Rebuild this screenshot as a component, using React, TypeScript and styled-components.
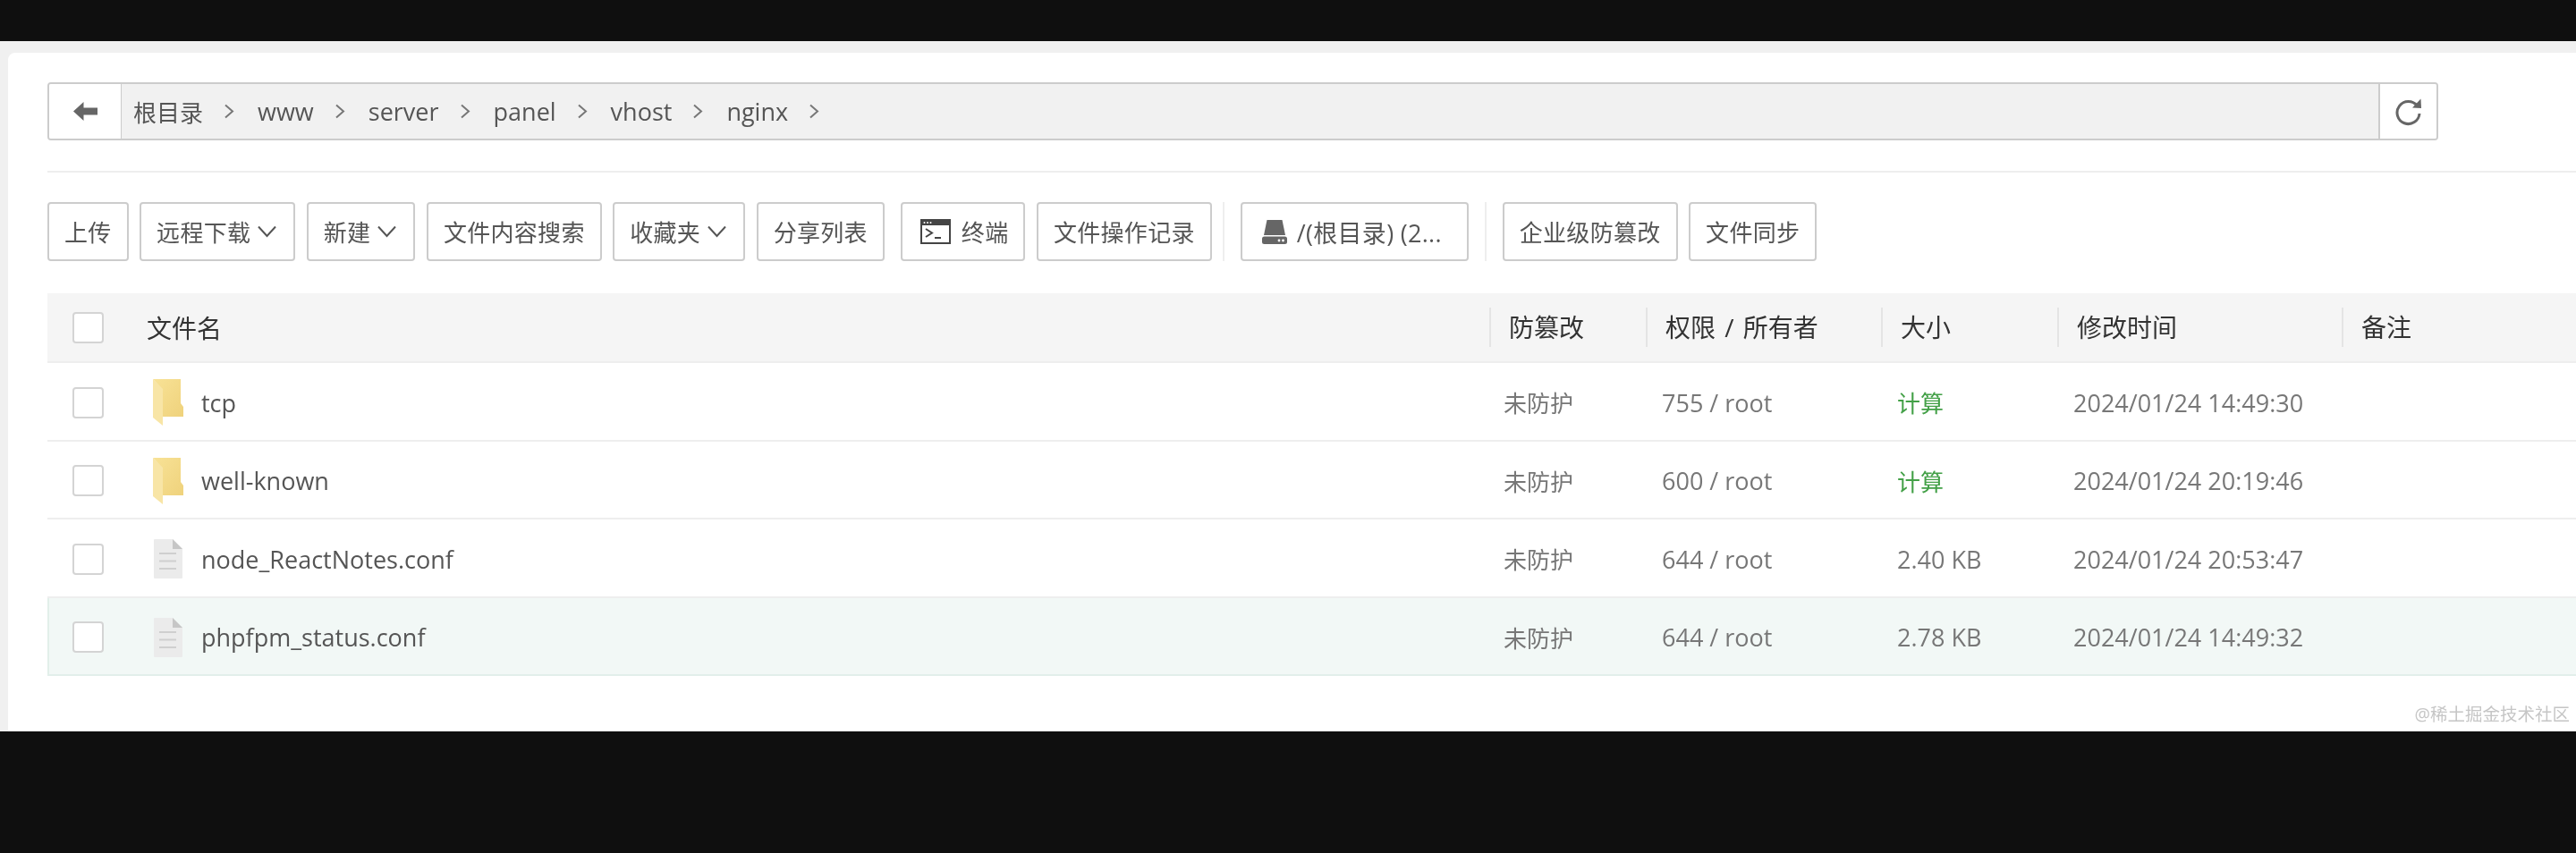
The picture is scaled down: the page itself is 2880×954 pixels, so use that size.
import React from 'react';
import styled, { createGlobalStyle } from 'styled-components';

const GlobalStyle = createGlobalStyle`
  html, body {
    margin: 0;
    padding: 0;
    background: #0f0f0f;
  }
  * {
    box-sizing: border-box;
  }
`;

const FONT = '"Open Sans", "Noto Sans CJK SC", sans-serif';

const Page = styled.div`
  width: 2880px;
  height: 954px;
  padding-top: 46px;
  background: #0f0f0f;
  font-family: ${FONT};
  overflow: hidden;
  filter: blur(0.5px);
`;

const Shell = styled.div`
  height: 772px;
  padding: 13px 0 0 9px;
  background: #f0f0f0;
`;

const Card = styled.div`
  position: relative;
  height: 759px;
  padding: 33px 0 0 44px;
  background: #fff;
  border-radius: 8px 0 0 0;
`;

const PathBar = styled.div`
  display: flex;
  width: 2673px;
  height: 65px;
  background: #f1f1f1;
  border: 2px solid #ccc;
  border-radius: 4px;
  overflow: hidden;
`;

const BackButton = styled.div`
  display: flex;
  flex: none;
  align-items: center;
  justify-content: center;
  width: 81px;
  background: #fff;
  border-right: 1px solid #ccc;
`;

const Crumbs = styled.div`
  display: flex;
  flex: 1;
  align-items: center;
  padding-left: 13px;
`;

const Crumb = styled.span<{ $cjk?: boolean }>`
  display: flex;
  align-items: center;
  gap: 23px;
  margin-right: 26px;
  font-size: ${(p) => (p.$cjk ? 26 : 27)}px;
  color: #555;
`;

const RefreshButton = styled.div`
  display: flex;
  flex: none;
  align-items: center;
  justify-content: center;
  width: 65px;
  background: #fff;
  border-left: 2px solid #ccc;
`;

const Divider = styled.div`
  height: 2px;
  margin: 34px 0 33px;
  background: #eee;
`;

const Toolbar = styled.div`
  display: flex;
  align-items: stretch;
  height: 66px;
`;

const ToolButton = styled.div<{ $gap?: number; $width?: number }>`
  display: flex;
  flex: none;
  align-items: center;
  width: ${(p) => (p.$width ? `${p.$width}px` : 'auto')};
  height: 66px;
  margin-right: ${(p) => p.$gap ?? 12.5}px;
  padding: 0 17px;
  background: #fff;
  border: 2px solid #ccc;
  border-radius: 4px;
  font-size: 26px;
  letter-spacing: 0.3px;
  color: #555;
  white-space: nowrap;
`;

const Caret = styled.svg`
  margin-left: 8px;
  margin-right: 2px;
`;

const IconSlot = styled.span<{ $lead: number; $gap: number }>`
  display: flex;
  margin-left: ${(p) => p.$lead}px;
  margin-right: ${(p) => p.$gap}px;
`;

const DiskLabel = styled.span`
  font-size: 27px;
`;

const ToolSeparator = styled.div`
  flex: none;
  width: 2px;
  margin-right: 18px;
  background: #eee;
`;

const Table = styled.div`
  margin-top: 36px;
`;

const COLUMNS = '1612px 175px 263px 197px 318px 1fr';

const HeadRow = styled.div`
  display: grid;
  grid-template-columns: ${COLUMNS};
  align-items: center;
  height: 78px;
  background: #f5f5f5;
  border-bottom: 2px solid #eee;
  font-size: 28px;
  color: #333;
`;

const NameHead = styled.div`
  display: flex;
  align-items: center;
  padding-left: 28px;
`;

const HeadLabel = styled.div`
  height: 44px;
  padding-left: 20px;
  border-left: 2px solid #e4e4e4;
  line-height: 44px;
  word-spacing: 3px;
`;

const Row = styled.div<{ $active?: boolean }>`
  display: grid;
  grid-template-columns: ${COLUMNS};
  align-items: center;
  height: 87.5px;
  padding-top: 3px;
  background: ${(p) => (p.$active ? '#f2f8f6' : '#fff')};
  border-bottom: 2px solid ${(p) => (p.$active ? '#e2efea' : '#eee')};
  box-shadow: ${(p) => (p.$active ? 'inset 2px 0 0 #e2efea' : 'none')};
  font-size: 27px;
  color: #666;
`;

const NameCell = styled.div`
  display: flex;
  align-items: center;
  padding-left: 28px;
  color: #555;
`;

const Check = styled.span<{ $gap: number }>`
  flex: none;
  width: 35px;
  height: 35px;
  margin-right: ${(p) => p.$gap}px;
  background: #fff;
  border: 2px solid #d4d4d4;
  border-radius: 4px;
`;

const FileName = styled.span`
  margin-left: 20px;
`;

const Cell = styled.div<{ $pad?: number; $green?: boolean; $cjk?: boolean }>`
  padding-left: ${(p) => p.$pad ?? 18}px;
  font-size: ${(p) => (p.$cjk ? 26 : 27)}px;
  color: ${(p) => (p.$green ? '#43a047' : '#777')};
  white-space: nowrap;
`;

const Watermark = styled.div`
  position: absolute;
  right: 7px;
  bottom: 6px;
  font-size: 19.5px;
  color: #c6c6c6;
`;

const Chevron = () => (
  <svg width="12" height="17" viewBox="0 0 12 17" fill="none">
    <path d="M2 1.5 L10 8.5 L2 15.5" stroke="#777" strokeWidth="2" />
  </svg>
);

const CaretDown = () => (
  <Caret width="21" height="14" viewBox="0 0 21 14" fill="none">
    <path d="M1 1.5 L10.5 12 L20 1.5" stroke="#555" strokeWidth="2" />
  </Caret>
);

const BackIcon = () => (
  <svg width="27" height="21" viewBox="0 0 27 21" fill="#666">
    <path d="M0 10.5 L11.5 0 V6.5 H27 V14.5 H11.5 V21 Z" />
  </svg>
);

const RefreshIcon = () => (
  <svg width="30" height="32" viewBox="0 0 30 32" fill="none">
    <path d="M24.5 9.5 A12.5 12.5 0 1 0 27 18" stroke="#666" strokeWidth="3" />
    <path d="M19 11.5 L29 12 L28.5 1.5 Z" fill="#666" />
  </svg>
);

const TerminalIcon = () => (
  <svg width="34" height="28" viewBox="0 0 34 28" fill="none">
    <rect x="1" y="1" width="32" height="26" fill="#fff" stroke="#444" strokeWidth="2" />
    <rect x="1" y="1" width="32" height="6" fill="#444" />
    <circle cx="4.5" cy="4" r="1" fill="#fff" />
    <circle cx="8" cy="4" r="1" fill="#fff" />
    <circle cx="11.5" cy="4" r="1" fill="#fff" />
    <path d="M6 11 L13 15.5 L6 20" stroke="#444" strokeWidth="2" />
    <path d="M16 21 H23" stroke="#444" strokeWidth="2" />
  </svg>
);

const DiskIcon = () => (
  <svg width="28" height="27" viewBox="0 0 28 27" fill="#666">
    <path d="M5.5 0 H22.5 L26 17 H2 Z" />
    <rect x="0" y="18.5" width="28" height="8.5" rx="2.5" />
    <circle cx="19" cy="23" r="1.4" fill="#fff" />
    <circle cx="23.5" cy="23" r="1.4" fill="#fff" />
  </svg>
);

const FolderIcon = () => (
  <svg width="34" height="52" viewBox="0 0 34 52">
    <defs>
      <linearGradient id="folderBack" x1="0" y1="0" x2="1" y2="1">
        <stop offset="0" stopColor="#f8e296" />
        <stop offset="1" stopColor="#efd27c" />
      </linearGradient>
    </defs>
    <path d="M0 0 H31 V27 L34 31 V42 H11 V12 Z" fill="url(#folderBack)" />
    <path d="M0 0 L11 11 V52 L0 43 Z" fill="#f8e5a6" />
  </svg>
);

const DocIcon = () => (
  <svg width="34" height="44" viewBox="0 0 34 44">
    <g transform="translate(1 0)">
      <path d="M0 1 a1 1 0 0 1 1 -1 H21 L32 11 V43 a1 1 0 0 1 -1 1 H1 a1 1 0 0 1 -1 -1 Z" fill="#ebebeb" />
      <path d="M21 0 L32 11 H21 Z" fill="#c6c6c6" />
      <path d="M6 16 H25 M6 24.5 H25 M6 33 H25" stroke="#cfcfcf" strokeWidth="2" />
    </g>
  </svg>
);

const crumbs = ['根目录', 'www', 'server', 'panel', 'vhost', 'nginx'];

const files = [
  { name: 'tcp', folder: true, perm: '755 / root', size: '计算', time: '2024/01/24 14:49:30' },
  { name: 'well-known', folder: true, perm: '600 / root', size: '计算', time: '2024/01/24 20:19:46' },
  { name: 'node_ReactNotes.conf', folder: false, perm: '644 / root', size: '2.40 KB', time: '2024/01/24 20:53:47' },
  { name: 'phpfpm_status.conf', folder: false, perm: '644 / root', size: '2.78 KB', time: '2024/01/24 14:49:32' },
];

function App() {
  return (
    <Page>
      <GlobalStyle />
      <Shell>
        <Card>
          <PathBar>
            <BackButton>
              <BackIcon />
            </BackButton>
            <Crumbs>
              {crumbs.map((c, i) => (
                <Crumb key={c} $cjk={i === 0}>
                  {c}
                  <Chevron />
                </Crumb>
              ))}
            </Crumbs>
            <RefreshButton>
              <RefreshIcon />
            </RefreshButton>
          </PathBar>
          <Divider />
          <Toolbar>
            <ToolButton>上传</ToolButton>
            <ToolButton>
              远程下载
              <CaretDown />
            </ToolButton>
            <ToolButton>
              新建
              <CaretDown />
            </ToolButton>
            <ToolButton>文件内容搜索</ToolButton>
            <ToolButton>
              收藏夹
              <CaretDown />
            </ToolButton>
            <ToolButton $gap={18}>分享列表</ToolButton>
            <ToolButton>
              <IconSlot $lead={3} $gap={12}>
                <TerminalIcon />
              </IconSlot>
              终端
            </ToolButton>
            <ToolButton $gap={12}>文件操作记录</ToolButton>
            <ToolSeparator />
            <ToolButton $gap={18} $width={255}>
              <IconSlot $lead={5} $gap={11}>
                <DiskIcon />
              </IconSlot>
              <DiskLabel>/(根目录) (2...</DiskLabel>
            </ToolButton>
            <ToolSeparator />
            <ToolButton>企业级防篡改</ToolButton>
            <ToolButton>文件同步</ToolButton>
          </Toolbar>
          <Table>
            <HeadRow>
              <NameHead>
                <Check $gap={48} />
                文件名
              </NameHead>
              <HeadLabel>防篡改</HeadLabel>
              <HeadLabel>权限 / 所有者</HeadLabel>
              <HeadLabel>大小</HeadLabel>
              <HeadLabel>修改时间</HeadLabel>
              <HeadLabel>备注</HeadLabel>
            </HeadRow>
            {files.map((f, i) => (
              <Row key={f.name} $active={i === files.length - 1}>
                <NameCell>
                  <Check $gap={55} />
                  {f.folder ? <FolderIcon /> : <DocIcon />}
                  <FileName>{f.name}</FileName>
                </NameCell>
                <Cell $pad={16} $cjk>
                  未防护
                </Cell>
                <Cell>{f.perm}</Cell>
                <Cell $green={f.size === '计算'} $cjk={f.size === '计算'}>
                  {f.size}
                </Cell>
                <Cell>{f.time}</Cell>
                <Cell />
              </Row>
            ))}
          </Table>
          <Watermark>@稀土掘金技术社区</Watermark>
        </Card>
      </Shell>
    </Page>
  );
}

export default App;
